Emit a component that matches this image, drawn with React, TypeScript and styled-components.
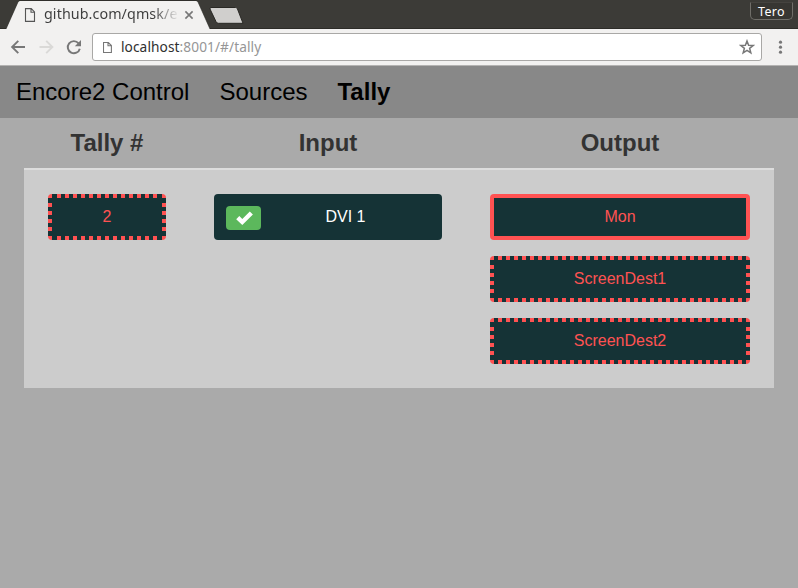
import React from "react";
import styled, { createGlobalStyle, css } from "styled-components";

const Global = createGlobalStyle`
  * { box-sizing: border-box; }
  html, body { margin: 0; padding: 0; background: #aaa; }
  body { font-family: "Liberation Sans", Arial, sans-serif; font-size: 16px; overflow: hidden; }
`;

const Window = styled.div`
  width: 798px;
  height: 588px;
  display: flex;
  flex-direction: column;
  background: #aaa;
  overflow: hidden;
`;

const chromeFont = css`
  font-family: "Noto Sans", "Open Sans", sans-serif;
`;

const TabStrip = styled.div`
  ${chromeFont}
  height: 29px;
  background: #3c3b37;
  display: flex;
  align-items: flex-start;
  border-bottom: 1px solid #2d2c28;
`;

const Tab = styled.div`
  position: relative;
  width: 212px;
  height: 29px;
  display: flex;
  align-items: center;
  padding-left: 24px;
  flex: none;
`;

const TabShape = styled.svg`
  position: absolute;
  left: 0;
  top: 0;
`;

const TabIcon = styled.svg`
  position: relative;
  flex: none;
`;

const TabTitle = styled.span`
  position: relative;
  margin-left: 8px;
  margin-top: -2px;
  width: 136px;
  line-height: 20px;
  font-size: 14.3px;
  letter-spacing: 0.08px;
  white-space: nowrap;
  background: linear-gradient(90deg, #3c3c3c 0 110px, rgba(60, 60, 60, 0) 135px);
  background-clip: text;
  color: transparent;
`;

const CloseIcon = styled.svg`
  position: relative;
  margin-left: 4px;
  flex: none;
`;

const NewTab = styled.svg`
  flex: none;
  margin: 6px 0 0 -3px;
`;

const UserBadge = styled.div`
  width: 43px;
  height: 18px;
  margin: 2px 5px 0 auto;
  border: 1px solid #706e69;
  border-top-color: #45433f;
  border-radius: 1px 1px 5px 5px;
  background: #373632;
  color: #fff;
  font-size: 12.5px;
  letter-spacing: 0.3px;
  line-height: 18px;
  text-align: center;
`;

const Toolbar = styled.div`
  ${chromeFont}
  height: 37px;
  background: #f2f1f0;
  border-bottom: 1px solid #b4b3b2;
  display: flex;
  align-items: center;
  padding: 0 9px 0 10px;
`;

const NavIcons = styled.svg`
  flex: none;
`;

const AddressBar = styled.div`
  flex: 1;
  height: 28px;
  margin-left: 10px;
  border: 1px solid #a9a8a6;
  border-radius: 3px;
  background: #fff;
  display: flex;
  align-items: center;
  padding: 0 6px 0 10px;
`;

const Url = styled.span`
  flex: 1;
  margin-left: 9px;
  font-size: 13.7px;
  letter-spacing: 0.08px;
  line-height: 20px;
  color: #969696;
  white-space: nowrap;
`;

const Host = styled.span`
  color: #303030;
`;

const MenuDots = styled.svg`
  flex: none;
  margin-left: 10px;
`;

const Navbar = styled.nav`
  height: 52px;
  background: #888;
  display: flex;
  gap: 30px;
  padding: 0 16px;
  font-size: 24px;
  line-height: 52px;
  color: #000;
  white-space: nowrap;
`;

const NavItem = styled.span<{ $active?: boolean }>`
  font-weight: ${(p) => (p.$active ? 700 : 400)};
`;

const Table = styled.section`
  margin: 0 24px;
`;

const Row = styled.div`
  display: grid;
  grid-template-columns: 166px 276px 308px;
`;

const Body = styled(Row)`
  border-top: 2px solid #ddd;
  background: #ccc;
`;

const Heading = styled.div`
  height: 50px;
  line-height: 50px;
  text-align: center;
  font-size: 24px;
  font-weight: 700;
  color: #333;
`;

const Cell = styled.div`
  padding: 24px;
  display: flex;
  flex-direction: column;
  gap: 16px;
`;

const dash = (angle: string) =>
  `repeating-linear-gradient(${angle}, #ff5252 0 4px, #153336 4px 8px)`;
const corner = "linear-gradient(#ff5252, #ff5252)";

const Button = styled.div<{ $tone?: "solid" | "dashed"; $inset?: number }>`
  height: 46px;
  border-radius: 4px;
  display: flex;
  align-items: center;
  justify-content: center;
  line-height: 20px;
  padding-bottom: 1px;
  color: ${(p) => (p.$tone ? "#ff5252" : "#fff")};
  background-color: #153336;
  ${(p) =>
    p.$tone === "solid" &&
    css`
      border: 4px solid #ff5252;
    `}
  ${(p) => {
    const i = p.$inset ?? 8;
    return (
      p.$tone === "dashed" &&
      css`
        background-image: ${corner}, ${corner}, ${corner}, ${corner},
          ${dash("90deg")}, ${dash("90deg")}, ${dash("180deg")}, ${dash("180deg")};
        background-repeat: no-repeat;
        background-position: 0 0, 100% 0, 0 100%, 100% 100%,
          ${i}px 0, ${i}px 100%, 0 9px, 100% 9px;
        background-size: 4px 4px, 4px 4px, 4px 4px, 4px 4px,
          calc(100% - ${i * 2}px) 4px, calc(100% - ${i * 2}px) 4px, 4px 28px, 4px 28px;
      `
    );
  }}
`;

const InputButton = styled(Button)`
  justify-content: flex-start;
  padding: 0 12px;
`;

const StatusBadge = styled.span`
  width: 35px;
  height: 24px;
  margin-top: 1px;
  padding-left: 1px;
  border-radius: 4px;
  background: #5cb85c;
  display: flex;
  align-items: center;
  justify-content: center;
  flex: none;
`;

const InputName = styled.span`
  flex: 1;
  text-align: center;
  padding-bottom: 1px;
`;

export default function App() {
  return (
    <Window>
      <Global />
      <TabStrip>
        <Tab>
          <TabShape width="216" height="29" viewBox="0 0 216 29">
            <path d="M0 29H6L18 2Q18.7 1 20 1H196Q197.5 1 198 2L210 29Z" fill="#f2f1f0" />
            <path d="M6 29L18 2Q18.7 .5 20 .5H196Q197.5 .5 198 2L210 29" fill="none" stroke="#292824" strokeWidth=".6" />
            <path d="M0 28.5H6" stroke="#2d2c28" />
            <path d="M0 0H18.5L6.2 28H0Z" fill="#3c3b37" />
          </TabShape>
          <TabIcon width="12" height="14" viewBox="0 0 12 14">
            <path d="M1.5 .6H7.3L10.5 3.9V13.4H1.5ZM7 .6V4.3H10.5" fill="none" stroke="#555" strokeWidth="1.1" />
          </TabIcon>
          <TabTitle>github.com/qmsk/e</TabTitle>
          <CloseIcon width="10" height="10" viewBox="0 0 10 10">
            <path d="M1.4 1.4L8.6 8.6M8.6 1.4L1.4 8.6" stroke="#777" strokeWidth="1.6" />
          </CloseIcon>
        </Tab>
        <NewTab width="36" height="19" viewBox="0 0 36 19">
          <path d="M2 1.5H26.500Q27.800 1.500 28.400 2.800L34 17.300H9.500Q7.800 17.300 7.100 15.800L1 3Q.6 1.500 2 1.500Z" fill="#d0cfcd" stroke="#292824" />
        </NewTab>
        <UserBadge>Tero</UserBadge>
      </TabStrip>
      <Toolbar>
        <NavIcons width="72" height="18" viewBox="0 0 72 18">
          <g fill="none" strokeWidth="1.9">
            <path d="M15 9H2.5M8.3 2.8L2.1 9L8.3 15.2" stroke="#777" />
            <path d="M29.5 9H42M36.2 2.8L42.4 9L36.2 15.2" stroke="#dad9d7" />
            <path d="M68.600 5.300A6.100 6.100 0 1 0 69.800 10.700" stroke="#777" />
          </g>
          <path d="M71 2V8.200H64.800Z" fill="#777" />
        </NavIcons>
        <AddressBar>
          <svg width="9" height="11" viewBox="0 0 9 11">
            <path d="M.5 .5H5.300L8.400 3.600V10.500H.5ZM5 .5V3.800H8.400" fill="none" stroke="#777" strokeWidth="1.100" />
          </svg>
          <Url>
            <Host>localhost</Host>:8001/#/tally
          </Url>
          <svg width="16" height="16" viewBox="0 0 16 16">
            <path d="M8 2L9.600 6.300L14.100 6.500L10.600 9.300L11.800 13.800L8 11.300L4.200 13.800L5.400 9.300L1.900 6.500L6.400 6.300Z" fill="none" stroke="#777" strokeWidth="1.500" />
          </svg>
        </AddressBar>
        <MenuDots width="17" height="16" viewBox="0 0 17 16">
          <g fill="#777">
            <circle cx="8.5" cy="3.2" r="1.6" />
            <circle cx="8.5" cy="8.2" r="1.6" />
            <circle cx="8.5" cy="13.2" r="1.6" />
          </g>
        </MenuDots>
      </Toolbar>
      <Navbar>
        <NavItem>Encore2 Control</NavItem>
        <NavItem>Sources</NavItem>
        <NavItem $active>Tally</NavItem>
      </Navbar>
      <Table>
        <Row>
          <Heading>Tally #</Heading>
          <Heading>Input</Heading>
          <Heading>Output</Heading>
        </Row>
        <Body>
          <Cell>
            <Button $tone="dashed" $inset={9}>2</Button>
          </Cell>
          <Cell>
            <InputButton>
              <StatusBadge>
                <svg width="17" height="14" viewBox="0 0 17 14">
                  <path d="M.2 8.300L3.300 5.100L6.300 8.100L13.800 .4L16.900 3.400L6.300 13.900Z" fill="#fff" />
                </svg>
              </StatusBadge>
              <InputName>DVI 1</InputName>
            </InputButton>
          </Cell>
          <Cell>
            <Button $tone="solid">Mon</Button>
            <Button $tone="dashed">ScreenDest1</Button>
            <Button $tone="dashed">ScreenDest2</Button>
          </Cell>
        </Body>
      </Table>
    </Window>
  );
}
